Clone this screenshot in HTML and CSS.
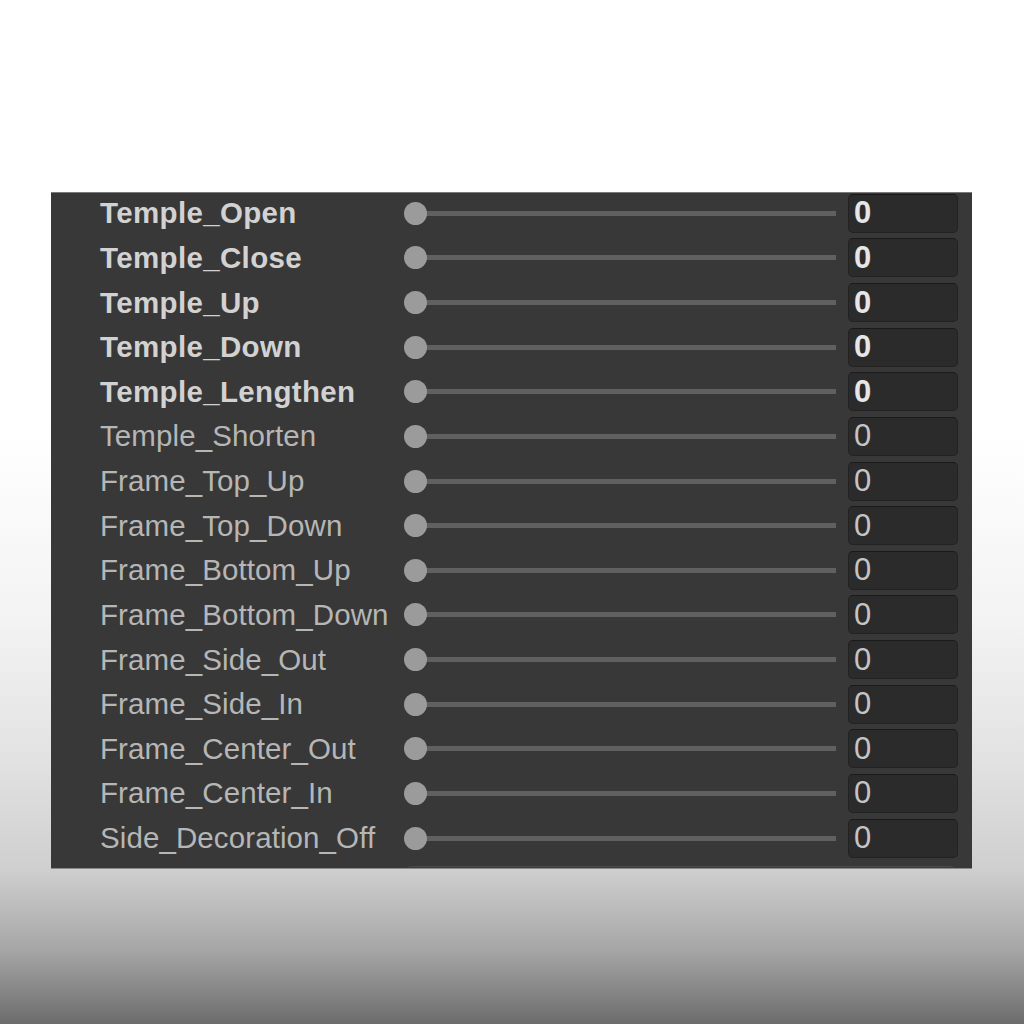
FILE: index.html
```html
<!DOCTYPE html>
<html>
<head>
<meta charset="utf-8">
<link rel="stylesheet" href="styles.css">
</head>
<body>
<div class="page">
  <div class="panel">
    <div class="rows">
      <div class="row strong"><span class="label">Temple_Open</span><div class="slider"><span class="knob"></span></div><div class="num">0</div></div>
      <div class="row strong"><span class="label">Temple_Close</span><div class="slider"><span class="knob"></span></div><div class="num">0</div></div>
      <div class="row strong"><span class="label">Temple_Up</span><div class="slider"><span class="knob"></span></div><div class="num">0</div></div>
      <div class="row strong"><span class="label">Temple_Down</span><div class="slider"><span class="knob"></span></div><div class="num">0</div></div>
      <div class="row strong"><span class="label">Temple_Lengthen</span><div class="slider"><span class="knob"></span></div><div class="num">0</div></div>
      <div class="row"><span class="label">Temple_Shorten</span><div class="slider"><span class="knob"></span></div><div class="num">0</div></div>
      <div class="row"><span class="label">Frame_Top_Up</span><div class="slider"><span class="knob"></span></div><div class="num">0</div></div>
      <div class="row"><span class="label">Frame_Top_Down</span><div class="slider"><span class="knob"></span></div><div class="num">0</div></div>
      <div class="row"><span class="label">Frame_Bottom_Up</span><div class="slider"><span class="knob"></span></div><div class="num">0</div></div>
      <div class="row"><span class="label">Frame_Bottom_Down</span><div class="slider"><span class="knob"></span></div><div class="num">0</div></div>
      <div class="row"><span class="label">Frame_Side_Out</span><div class="slider"><span class="knob"></span></div><div class="num">0</div></div>
      <div class="row"><span class="label">Frame_Side_In</span><div class="slider"><span class="knob"></span></div><div class="num">0</div></div>
      <div class="row"><span class="label">Frame_Center_Out</span><div class="slider"><span class="knob"></span></div><div class="num">0</div></div>
      <div class="row"><span class="label">Frame_Center_In</span><div class="slider"><span class="knob"></span></div><div class="num">0</div></div>
      <div class="row"><span class="label">Side_Decoration_Off</span><div class="slider"><span class="knob"></span></div><div class="num">0</div></div>
      <div class="tail"><div class="tail-box"></div></div>
    </div>
  </div>
</div>
</body>
</html>
```

FILE: styles.css
```css
html, body {
  margin: 0;
  padding: 0;
}
body {
  width: 1024px;
  height: 1024px;
  overflow: hidden;
  background: linear-gradient(to bottom, #ffffff 0px, #ffffff 430px, #f3f3f3 620px, #e2e2e2 760px, #cfcfcf 870px, #a6a6a6 950px, #6c6c6c 1024px);
  font-family: "Liberation Sans", Arial, sans-serif;
}
.page {
  padding-top: 192px;
  padding-left: 51px;
}
.panel {
  width: 921px;
  height: 677px;
  background: #383838;
  overflow: hidden;
  border-top: 1px solid #7a7a7a;
  border-bottom: 1px solid #8a8a8a;
  box-sizing: border-box;
}
.rows {
  margin-top: -2px;
  display: flex;
  flex-direction: column;
}
.row {
  height: 44.64px;
  display: flex;
  align-items: center;
  padding-left: 49px;
  padding-right: 14px;
}
.label {
  width: 304px;
  flex: none;
  font-size: 29.5px;
  color: #b6b6b6;
  white-space: nowrap;
  letter-spacing: 0.1px;
}
.strong .label {
  font-weight: bold;
  color: #d2d2d2;
  letter-spacing: 0.35px;
}
.slider {
  flex: none;
  width: 432px;
  height: 22px;
  display: flex;
  align-items: center;
  background: linear-gradient(#606060, #606060) no-repeat 11px 50% / 421px 5px;
}
.knob {
  width: 23px;
  height: 23px;
  border-radius: 50%;
  background: #9b9b9b;
}
.num {
  margin-left: 12px;
  width: 110px;
  height: 39px;
  box-sizing: border-box;
  border-radius: 5px;
  background: #2b2b2b;
  border: 1px solid #222222;
  border-top-color: #1a1a1a;
  display: flex;
  align-items: center;
  padding-left: 5px;
  font-size: 31px;
  color: #c4c4c4;
}
.strong .num {
  font-weight: bold;
  color: #e6e6e6;
}
.tail {
  padding-left: 355px;
  padding-top: 6px;
}
.tail-box {
  width: 549px;
  height: 30px;
  border-radius: 5px;
  background: #3c3c3c;
  border-top: 1px solid #4a4a4a;
}
```
